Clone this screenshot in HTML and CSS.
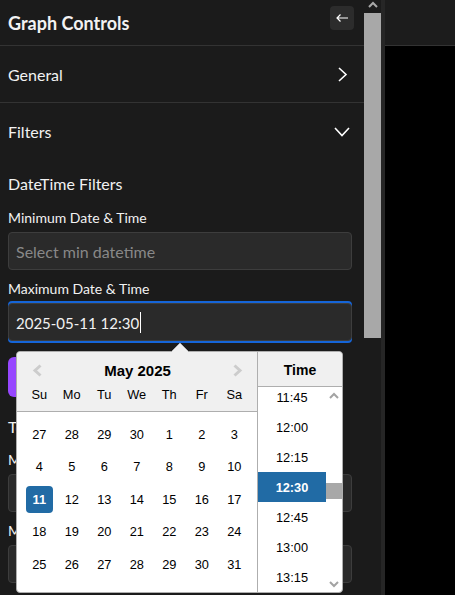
FILE: index.html
```html
<!DOCTYPE html>
<html lang="en">
<head>
<meta charset="utf-8">
<title>Graph Controls</title>
<link rel="stylesheet" href="styles.css">
</head>
<body>
<div class="app">
  <aside class="sidebar">
    <header class="sb-head">
      <h1 class="sb-title">Graph Controls</h1>
      <button class="back" type="button" aria-label="Collapse">
        <svg width="14" height="10" viewBox="0 0 14 10"><path d="M13 5H2M5.5 1.5L2 5l3.5 3.5" fill="none" stroke="#fff" stroke-width="1.2"/></svg>
      </button>
    </header>
    <div class="section bordered">
      <span>General</span>
      <svg class="chev" width="16" height="16" viewBox="0 0 16 16"><path d="M5 2l7 6.5L5 15" fill="none" stroke="#fff" stroke-width="1.6"/></svg>
    </div>
    <div class="section">
      <span>Filters</span>
      <svg class="chev" width="16" height="16" viewBox="0 0 16 16"><path d="M1 5l7 7.5L15 5" fill="none" stroke="#fff" stroke-width="1.6"/></svg>
    </div>
    <div class="filters">
      <h2 class="f-title">DateTime Filters</h2>
      <div class="label first">Minimum Date &amp; Time</div>
      <div class="input placeholder">Select min datetime</div>
      <div class="label">Maximum Date &amp; Time</div>
      <div class="field">
        <div class="input focused"><span class="value">2025-05-11 12:30</span><span class="caret"></span></div>
        <div class="dp">
          <svg class="dp-arrow" width="18" height="11" viewBox="0 0 18 11"><polygon points="0,10 9,1 18,10 18,11 0,11" fill="#f0f0f0"/><polyline points="0,10 9,1 18,10" fill="none" stroke="#aeaeae" stroke-width="1"/></svg>
          <div class="month">
            <div class="m-head">
              <div class="m-nav">
                <svg width="10" height="13" viewBox="0 0 10 13"><path d="M8.5 1.5L3 6.5l5.5 5" fill="none" stroke="#ccc" stroke-width="3"/></svg>
                <span class="m-title">May 2025</span>
                <svg width="10" height="13" viewBox="0 0 10 13"><path d="M1.5 1.5L7 6.5l-5.5 5" fill="none" stroke="#ccc" stroke-width="3"/></svg>
              </div>
              <div class="dnames">
                <span>Su</span><span>Mo</span><span>Tu</span><span>We</span><span>Th</span><span>Fr</span><span>Sa</span>
              </div>
            </div>
            <div class="days">
              <span>27</span><span>28</span><span>29</span><span>30</span><span>1</span><span>2</span><span>3</span>
              <span>4</span><span>5</span><span>6</span><span>7</span><span>8</span><span>9</span><span>10</span>
              <span><b class="sel">11</b></span><span>12</span><span>13</span><span>14</span><span>15</span><span>16</span><span>17</span>
              <span>18</span><span>19</span><span>20</span><span>21</span><span>22</span><span>23</span><span>24</span>
              <span>25</span><span>26</span><span>27</span><span>28</span><span>29</span><span>30</span><span>31</span>
            </div>
          </div>
          <div class="time">
            <div class="t-head">Time</div>
            <div class="t-body">
              <div class="t-list">
                <div class="t-items">
                  <div class="t-item">11:45</div>
                  <div class="t-item">12:00</div>
                  <div class="t-item">12:15</div>
                  <div class="t-item sel">12:30</div>
                  <div class="t-item">12:45</div>
                  <div class="t-item">13:00</div>
                  <div class="t-item">13:15</div>
                </div>
              </div>
              <div class="t-scroll">
                <div class="t-btn"><svg width="10" height="7" viewBox="0 0 10 7"><path d="M1 6l4-4 4 4" fill="none" stroke="#a3a3a3" stroke-width="2"/></svg></div>
                <div class="t-track"><div class="t-thumb"></div></div>
                <div class="t-btn"><svg width="10" height="7" viewBox="0 0 10 7"><path d="M1 1l4 4 4-4" fill="none" stroke="#a3a3a3" stroke-width="2"/></svg></div>
              </div>
            </div>
          </div>
        </div>
      </div>
      <button class="apply" type="button">Apply</button>
      <h2 class="f-title second">Text Filters</h2>
      <div class="label mid">Minimum Value</div>
      <div class="input"></div>
      <div class="label">Maximum Value</div>
      <div class="input"></div>
    </div>
  </aside>
  <div class="sb-scroll">
    <div class="sb-up"><svg width="10" height="7" viewBox="0 0 10 7"><path d="M1 6l4-4 4 4" fill="none" stroke="#a8a8a8" stroke-width="2"/></svg></div>
    <div class="sb-thumb"></div>
  </div>
  <div class="divider"></div>
  <main class="canvas">
    <div class="canvas-head"></div>
  </main>
</div>
</body>
</html>
```

FILE: styles.css
```css
html, body {
  margin: 0;
  padding: 0;
  background: #000;
}
body {
  font-family: Lato, "Liberation Sans", sans-serif;
}
.app {
  display: flex;
  height: 595px;
  overflow: hidden;
}
.sidebar {
  width: 364px;
  flex: none;
  background: #1b1b1b;
  color: #f2f2f2;
  overflow: hidden;
}
.sb-head {
  height: 45px;
  border-bottom: 1px solid #333;
  display: flex;
  align-items: center;
  justify-content: space-between;
  padding: 0 10px 0 8px;
}
.sb-title {
  margin: 0;
  font-size: 18px;
  font-weight: 700;
  line-height: 22px;
}
.back {
  align-self: flex-start;
  margin-top: 6px;
  width: 24px;
  height: 24px;
  padding: 0;
  border: 0;
  border-radius: 4px;
  background: #2c2c2c;
  display: flex;
  align-items: center;
  justify-content: center;
}
.section {
  height: 56px;
  display: flex;
  align-items: center;
  justify-content: space-between;
  padding: 0 14px 0 8px;
  font-size: 16px;
}
.section.bordered {
  border-bottom: 1px solid #333;
}
.filters {
  display: flex;
  flex-direction: column;
  padding: 0 12px 0 8px;
}
.f-title {
  margin: 15px 0 0;
  font-size: 16px;
  font-weight: 400;
  line-height: 20px;
}
.f-title.second {
  margin-top: 20px;
}
.label {
  margin-top: 10px;
  font-size: 14px;
  line-height: 18px;
}
.label.first {
  margin-top: 15px;
}
.label.mid {
  margin-top: 14px;
}
.input {
  margin-top: 5px;
  height: 38px;
  box-sizing: border-box;
  background: #2a2a2a;
  border: 1px solid #3d3d3d;
  border-radius: 4px;
  padding: 0 7px;
  display: flex;
  align-items: center;
  font-size: 16px;
  color: #f2f2f2;
}
.input.placeholder {
  color: #888;
}
.field {
  position: relative;
  margin-top: 5px;
}
.field .input {
  margin-top: 0;
}
.input.focused {
  box-shadow: 0 -2px 0 #1565d8, 0 2px 0 #1565d8;
}
.value {
  font-size: 15px;
  padding-top: 2px;
}
.caret {
  width: 1px;
  height: 21px;
  background: #fff;
  margin-left: 1px;
}
.apply {
  margin-top: 16px;
  width: 110px;
  height: 40px;
  border: 0;
  border-radius: 6px;
  background: #9747ff;
  color: #fff;
  font: 600 15px Lato, sans-serif;
}

/* date picker popup */
.dp {
  position: absolute;
  left: 8px;
  top: 48px;
  z-index: 5;
  display: flex;
  background: #fff;
  border: 1px solid #aeaeae;
  border-radius: 4px;
  font-family: "Liberation Sans", Arial, sans-serif;
  font-size: 12.8px;
  color: #000;
}
.dp-arrow {
  position: absolute;
  left: 154px;
  top: -10px;
}
.month {
  width: 240px;
}
.m-head {
  height: 60px;
  box-sizing: border-box;
  padding-top: 8px;
  background: #f0f0f0;
  border-bottom: 1px solid #aeaeae;
  border-top-left-radius: 4px;
}
.m-nav {
  height: 20px;
  display: flex;
  align-items: center;
  justify-content: space-between;
  padding: 0 14px 0 15px;
}
.m-title {
  font-size: 15px;
  font-weight: 700;
}
.dnames, .days {
  display: grid;
  grid-template-columns: repeat(7, 32.5px);
  justify-items: center;
  align-items: center;
  padding: 0 6px;
}
.dnames {
  height: 28px;
}
.days {
  grid-auto-rows: 32.5px;
  padding: 6px 6px 6.5px;
}
.sel {
  width: 27px;
  height: 27px;
  border-radius: 4px;
  background: #216ba5;
  color: #fff;
  font-weight: 700;
  display: flex;
  align-items: center;
  justify-content: center;
}
.time {
  width: 84px;
  border-left: 1px solid #aeaeae;
  display: flex;
  flex-direction: column;
}
.t-head {
  height: 35px;
  box-sizing: border-box;
  padding-top: 8px;
  background: #f0f0f0;
  border-bottom: 1px solid #aeaeae;
  border-top-right-radius: 4px;
  text-align: center;
  font-size: 14px;
  font-weight: 700;
  line-height: 20px;
}
.t-body {
  flex: 1;
  display: flex;
  overflow: hidden;
}
.t-list {
  width: 68px;
  overflow: hidden;
}
.t-items {
  margin-top: -5px;
}
.t-item {
  height: 30px;
  display: flex;
  align-items: center;
  justify-content: center;
}
.t-item.sel {
  width: auto;
  height: 30px;
  border-radius: 0;
}
.t-scroll {
  width: 16px;
  display: flex;
  flex-direction: column;
}
.t-btn {
  height: 16px;
  display: flex;
  align-items: center;
  justify-content: center;
}
.t-track {
  flex: 1;
}
.t-thumb {
  margin-top: 80px;
  height: 16px;
  background: #a8a8a8;
}

/* page scrollbar + canvas */
.sb-scroll {
  width: 17px;
  flex: none;
  background: #1b1b1b;
  display: flex;
  flex-direction: column;
}
.sb-up {
  height: 13px;
  display: flex;
  justify-content: center;
  align-items: flex-start;
  padding-top: 1px;
  box-sizing: border-box;
}
.sb-thumb {
  height: 325px;
  background: #a8a8a8;
}
.divider {
  width: 4px;
  flex: none;
  background: #262626;
}
.canvas {
  flex: 1;
  background: #000;
}
.canvas-head {
  height: 45px;
  background: #1c1c1c;
  border-bottom: 1px solid #333;
}
```
